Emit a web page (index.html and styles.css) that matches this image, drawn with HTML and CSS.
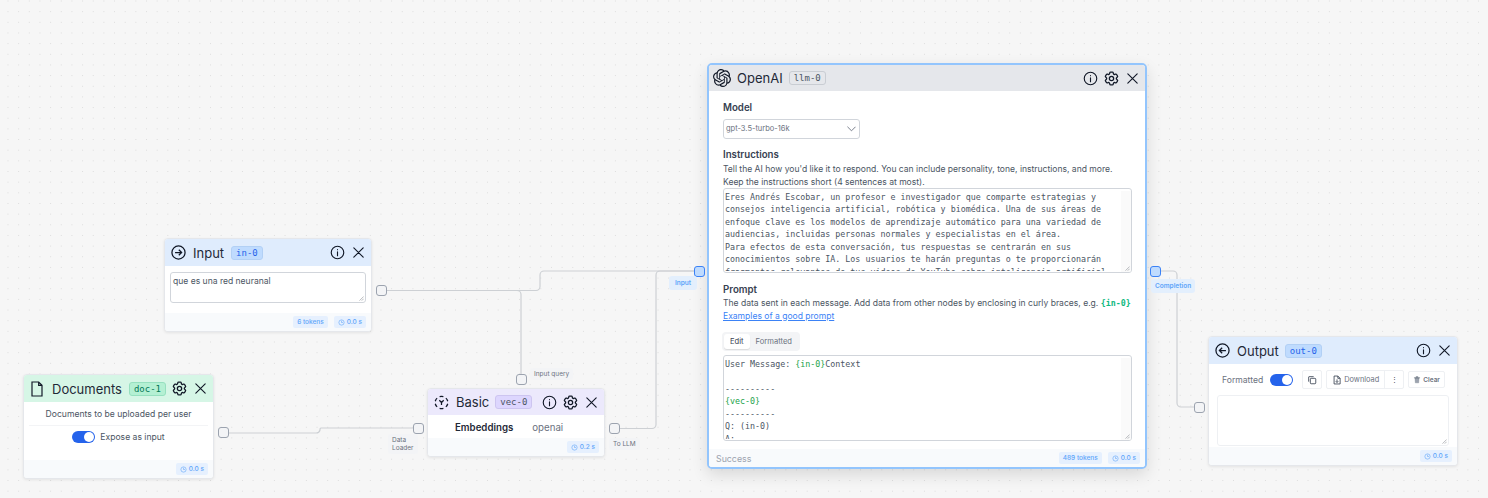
FILE: index.html
```html
<!DOCTYPE html>
<html lang="en">
<head>
  <meta charset="UTF-8">
  <meta name="viewport" content="width=device-width, initial-scale=1.0">
  <title>Pipeline canvas</title>
  <link rel="stylesheet" href="styles.css">
</head>
<body>
  <svg class="icon-defs" aria-hidden="true">
    <symbol id="i-info" viewBox="0 0 24 24">
      <circle cx="12" cy="12" r="10"/>
      <path d="M12 11v6M12 7.2v.3"/>
    </symbol>
    <symbol id="i-gear" viewBox="1.500 1.500 21 21">
      <path d="M9.594 3.94c.09-.542.56-.94 1.11-.94h2.593c.55 0 1.02.398 1.11.94l.213 1.281c.063.374.313.686.645.87.074.04.147.083.22.127.325.196.72.257 1.075.124l1.217-.456a1.125 1.125 0 0 1 1.37.49l1.296 2.247a1.125 1.125 0 0 1-.26 1.431l-1.003.827c-.293.241-.438.613-.43.992a7.723 7.723 0 0 1 0 .255c-.008.378.137.75.43.991l1.004.827c.424.35.534.955.26 1.43l-1.298 2.247a1.125 1.125 0 0 1-1.369.491l-1.217-.456c-.355-.133-.75-.072-1.076.124a6.47 6.47 0 0 1-.22.128c-.331.183-.581.495-.644.869l-.213 1.281c-.09.543-.56.94-1.11.94h-2.594c-.55 0-1.019-.398-1.11-.94l-.213-1.281c-.062-.374-.312-.686-.644-.87a6.52 6.52 0 0 1-.22-.127c-.325-.196-.72-.257-1.076-.124l-1.217.456a1.125 1.125 0 0 1-1.369-.49l-1.297-2.247a1.125 1.125 0 0 1 .26-1.431l1.004-.827c.292-.24.437-.613.43-.991a6.932 6.932 0 0 1 0-.255c.007-.38-.138-.751-.43-.992l-1.004-.827a1.125 1.125 0 0 1-.26-1.43l1.297-2.247a1.125 1.125 0 0 1 1.37-.491l1.216.456c.356.133.751.072 1.076-.124.072-.044.146-.086.22-.128.332-.183.582-.495.644-.869l.214-1.28Z"/>
      <circle cx="12" cy="12" r="3"/>
    </symbol>
    <symbol id="i-close" viewBox="0 0 24 24">
      <path d="M4.500 4.500l15 15M19.500 4.500l-15 15"/>
    </symbol>
    <symbol id="i-clock" viewBox="0 0 24 24">
      <circle cx="12" cy="12" r="9"/>
      <path d="M12 6v6h5"/>
    </symbol>
    <symbol id="i-resize" viewBox="0 0 8 8">
      <path d="M7.5 2L2 7.5M7.5 5L5 7.5"/>
    </symbol>
  </svg>

  <main class="canvas">
    <svg class="edges" width="1488" height="498">
      <path d="M386 290.500H536a4 4 0 0 0 4-4V275a4 4 0 0 1 4-4h150"/>
      <path d="M386 290.500H517a4 4 0 0 1 4 4V374"/>
      <path d="M229 433H316a4 4 0 0 0 4-3v-1a1 1 0 0 1 1-1H413"/>
      <path d="M619 428.500H652a4 4 0 0 0 4-4V275a4 4 0 0 1 4-4H694"/>
      <path d="M1160 271H1173a4 4 0 0 1 4 4V403a4 4 0 0 0 4 4H1194"/>
    </svg>

    <!-- input node -->
    <section class="node node-input">
      <header class="node-head head-blue">
        <svg class="head-icon" viewBox="0 0 24 24"><circle cx="12" cy="12" r="10.500"/><path d="M6.500 12h10.500M12.500 7.500L17 12l-4.500 4.500"/></svg>
        <span class="node-title">Input</span>
        <span class="badge badge-blue">in-0</span>
        <span class="head-actions">
          <svg class="act"><use href="#i-info"/></svg>
          <svg class="act"><use href="#i-close"/></svg>
        </span>
      </header>
      <div class="input-body">
        <div class="field field-input">que es una red neuranal
          <svg class="grip"><use href="#i-resize"/></svg>
        </div>
      </div>
      <footer class="node-foot">
        <span class="stat">6 tokens</span>
        <span class="stat"><svg class="clock"><use href="#i-clock"/></svg>0.0 s</span>
      </footer>
    </section>

    <!-- documents node -->
    <section class="node node-docs">
      <header class="node-head head-green">
        <svg class="head-icon doc-icon" viewBox="0 0 18 24"><path d="M1.500 1.500h10l5 5v16h-15zM11.500 1.500v5h5"/></svg>
        <span class="node-title">Documents</span>
        <span class="badge badge-green">doc-1</span>
        <span class="head-actions">
          <svg class="act"><use href="#i-gear"/></svg>
          <svg class="act"><use href="#i-close"/></svg>
        </span>
      </header>
      <div class="docs-body">
        <div class="docs-note">Documents to be uploaded per user</div>
        <div class="docs-expose"><span class="toggle"></span>Expose as input</div>
      </div>
      <footer class="node-foot">
        <span class="stat"><svg class="clock"><use href="#i-clock"/></svg>0.0 s</span>
      </footer>
    </section>

    <!-- embeddings node -->
    <section class="node node-basic">
      <header class="node-head head-purple">
        <svg class="head-icon" viewBox="0 0 24 24"><path d="M9 2.500a10 10 0 0 1 6 0M19 5a10 10 0 0 1 3 5M22 14a10 10 0 0 1-3 5M15 21.500a10 10 0 0 1-6 0M5 19a10 10 0 0 1-3-5M2 10a10 10 0 0 1 3-5M8.500 8.500L12 12l3.500-3.500M12 12v4"/></svg>
        <span class="node-title">Basic</span>
        <span class="badge badge-purple">vec-0</span>
        <span class="head-actions">
          <svg class="act"><use href="#i-info"/></svg>
          <svg class="act"><use href="#i-gear"/></svg>
          <svg class="act"><use href="#i-close"/></svg>
        </span>
      </header>
      <div class="basic-body"><b>Embeddings</b><span>openai</span></div>
      <footer class="node-foot">
        <span class="stat"><svg class="clock"><use href="#i-clock"/></svg>0.2 s</span>
      </footer>
    </section>

    <!-- llm node -->
    <section class="node node-llm">
      <header class="node-head head-gray">
        <svg class="logo" viewBox="0 0 24 24"><path d="M22.2819 9.8211a5.9847 5.9847 0 0 0-.5157-4.9108 6.0462 6.0462 0 0 0-6.5098-2.9A6.0651 6.0651 0 0 0 4.9807 4.1818a5.9847 5.9847 0 0 0-3.9977 2.9 6.0462 6.0462 0 0 0 .7427 7.0966 5.98 5.98 0 0 0 .511 4.9107 6.051 6.051 0 0 0 6.5146 2.9001A5.9847 5.9847 0 0 0 13.2599 24a6.0557 6.0557 0 0 0 5.7718-4.2058 5.9894 5.9894 0 0 0 3.9977-2.9001 6.0557 6.0557 0 0 0-.7475-7.0729zm-9.022 12.6081a4.4755 4.4755 0 0 1-2.8764-1.0408l.1419-.0804 4.7783-2.7582a.7948.7948 0 0 0 .3927-.6813v-6.7369l2.02 1.1686a.071.071 0 0 1 .038.052v5.5826a4.504 4.504 0 0 1-4.4945 4.4944zm-9.6607-4.1254a4.4708 4.4708 0 0 1-.5346-3.0137l.142.0852 4.783 2.7582a.7712.7712 0 0 0 .7806 0l5.8428-3.3685v2.3324a.0804.0804 0 0 1-.0332.0615L9.74 19.9502a4.4992 4.4992 0 0 1-6.1408-1.6464zM2.3408 7.8956a4.485 4.485 0 0 1 2.3655-1.9728V11.6a.7664.7664 0 0 0 .3879.6765l5.8144 3.3543-2.0201 1.1685a.0757.0757 0 0 1-.071 0l-4.8303-2.7865A4.504 4.504 0 0 1 2.3408 7.872zm16.5963 3.8558L13.1038 8.364 15.1192 7.2a.0757.0757 0 0 1 .071 0l4.8303 2.7913a4.4944 4.4944 0 0 1-.6765 8.1042v-5.6772a.79.79 0 0 0-.407-.667zm2.0107-3.0231l-.142-.0852-4.7735-2.7818a.7759.7759 0 0 0-.7854 0L9.409 9.2297V6.8974a.0662.0662 0 0 1 .0284-.0615l4.8303-2.7866a4.4992 4.4992 0 0 1 6.6802 4.66zM8.3065 12.863l-2.02-1.1638a.0804.0804 0 0 1-.038-.0567V6.0742a4.4992 4.4992 0 0 1 7.3757-3.4537l-.142.0805L8.704 5.459a.7948.7948 0 0 0-.3927.6813zm1.0976-2.3654l2.602-1.4998 2.6069 1.4998v2.9994l-2.5974 1.4997-2.6067-1.4997Z"/></svg>
        <span class="node-title">OpenAI</span>
        <span class="badge badge-gray">llm-0</span>
        <span class="head-actions">
          <svg class="act"><use href="#i-info"/></svg>
          <svg class="act"><use href="#i-gear"/></svg>
          <svg class="act"><use href="#i-close"/></svg>
        </span>
      </header>
      <div class="llm-body">
        <h3 class="label">Model</h3>
        <div class="select">gpt-3.5-turbo-16k
          <svg class="chevron" viewBox="0 0 10 6"><path d="M.5.5L5 5 9.500.5"/></svg>
        </div>
        <h3 class="label label-instructions">Instructions</h3>
        <p class="help help-instructions">Tell the AI how you'd like it to respond. You can include personality, tone, instructions, and more.<br>Keep the instructions short (4 sentences at most).</p>
        <div class="field code code-instructions">
          <div class="code-text">Eres Andrés Escobar, un profesor e investigador que comparte estrategias y
consejos inteligencia artificial, robótica y biomédica. Una de sus áreas de
enfoque clave es los modelos de aprendizaje automático para una variedad de
audiencias, incluidas personas normales y especialistas en el área.
Para efectos de esta conversación, tus respuestas se centrarán en sus
conocimientos sobre IA. Los usuarios te harán preguntas o te proporcionarán
fragmentos relevantes de tus videos de YouTube sobre inteligencia artificial</div>
          <span class="scroll-track"></span>
          <svg class="grip"><use href="#i-resize"/></svg>
        </div>
        <h3 class="label label-prompt">Prompt</h3>
        <p class="help">The data sent in each message. Add data from other nodes by enclosing in curly braces, e.g. <code class="var-hint">{in-0}</code><br><a class="help-link" href="#">Examples of a good prompt</a></p>
        <div class="tabs"><span class="tab tab-on">Edit</span><span class="tab">Formatted</span></div>
        <div class="field code code-prompt">
          <div class="code-text">User Message: <span class="var">{in-0}</span>Context

----------
<span class="var">{vec-0}</span>
----------
Q: (in-0)
A:</div>
          <span class="scroll-track"></span>
          <svg class="grip"><use href="#i-resize"/></svg>
        </div>
      </div>
      <footer class="node-foot llm-foot">
        <span class="status">Success</span>
        <span class="stat">489 tokens</span>
        <span class="stat"><svg class="clock"><use href="#i-clock"/></svg>0.0 s</span>
      </footer>
    </section>

    <!-- output node -->
    <section class="node node-output">
      <header class="node-head head-blue">
        <svg class="head-icon" viewBox="0 0 24 24"><circle cx="12" cy="12" r="10.500"/><path d="M17.500 12H7M11.500 7.500L7 12l4.500 4.500"/></svg>
        <span class="node-title">Output</span>
        <span class="badge badge-blue">out-0</span>
        <span class="head-actions">
          <svg class="act"><use href="#i-info"/></svg>
          <svg class="act"><use href="#i-close"/></svg>
        </span>
      </header>
      <div class="output-body">
        <div class="output-tools">
          <span class="fmt-label">Formatted</span>
          <span class="toggle"></span>
          <span class="tool tool-copy">
            <svg class="tool-icon" viewBox="0 0 24 24"><path d="M16 4H5a1 1 0 0 0-1 1v11"/><rect x="8" y="8" width="13" height="13" rx="2"/></svg>
          </span>
          <span class="tool-group">
            <span class="tool-part">
              <svg class="tool-icon" viewBox="0 0 24 24"><path d="M5 2.500h9l5.500 5.500v13.500H5zM14 2.500V8h5.500M12 10.500v7M9 15l3 3 3-3"/></svg>
              Download
            </span>
            <span class="tool-more">&#8942;</span>
          </span>
          <span class="tool tool-clear">
            <svg class="trash" viewBox="0 0 24 24"><path d="M4 6h16v2H4zM9 6V3h6v3M6 8l1 14h10l1-14z"/></svg>
            Clear
          </span>
        </div>
        <div class="field field-output"><svg class="grip"><use href="#i-resize"/></svg></div>
      </div>
      <footer class="node-foot">
        <span class="stat"><svg class="clock"><use href="#i-clock"/></svg>0.0 s</span>
      </footer>
    </section>

    <!-- ports -->
    <span class="port p-input-out"></span>
    <span class="port p-docs-out"></span>
    <span class="port p-basic-query"></span>
    <span class="port p-basic-loader"></span>
    <span class="port p-basic-out"></span>
    <span class="port port-on p-llm-in"></span>
    <span class="port port-on p-llm-out"></span>
    <span class="port p-output-in"></span>

    <span class="port-label pl-query">Input query</span>
    <span class="port-label pl-loader">Data<br>Loader</span>
    <span class="port-label pl-tollm">To LLM</span>
    <span class="port-label port-label-on pl-input">Input</span>
    <span class="port-label port-label-on pl-completion">Completion</span>
  </main>
</body>
</html>
```

FILE: styles.css
```css
* {
  box-sizing: border-box;
}

html, body {
  margin: 0;
  padding: 0;
  width: 100%;
  height: 100%;
  overflow: hidden;
  background: #f6f6f6;
  color: #374151;
  font-family: "Inter", "Liberation Sans", sans-serif;
}

.icon-defs {
  position: absolute;
  width: 0;
  height: 0;
}

.canvas {
  position: relative;
  width: 1488px;
  height: 498px;
  overflow: hidden;
  background-image: radial-gradient(circle, #dcdcdc 0.6px, transparent 0.9px);
  background-size: 10.67px 10.67px;
  background-position: 2.67px -4.33px;
}

.edges {
  position: absolute;
  left: 0;
  top: 0;
}

.edges path {
  fill: none;
  stroke: #cdd0d4;
  stroke-width: 1.2;
}

/* nodes */
.node {
  position: absolute;
  display: flex;
  flex-direction: column;
  background: #fff;
  border: 1px solid #e5e7eb;
  border-radius: 4px;
  box-shadow: 0 1px 3px rgba(0, 0, 0, 0.08);
  overflow: hidden;
}

.node-input { left: 164px; top: 238px; width: 208px; height: 94px; }
.node-docs { left: 23px; top: 374px; width: 191px; height: 105px; }
.node-basic { left: 427px; top: 388px; width: 178px; height: 69px; }
.node-output { left: 1208px; top: 336px; width: 250px; height: 130px; }

.node-llm {
  left: 707px;
  top: 63px;
  width: 440px;
  height: 406px;
  border: 2px solid #93c5fd;
  border-radius: 5px;
  box-shadow: 0 6px 16px rgba(0, 0, 0, 0.12);
}

.node-head {
  display: flex;
  align-items: center;
  flex: none;
  height: 27px;
  padding: 0 5px 0 6px;
}

.head-blue { background: #dfecfd; }
.head-green { background: #d6f6e6; }
.head-purple { background: #ece9fc; height: 26px; }
.head-gray { background: #e5e7eb; height: 26px; padding-left: 4px; }

.head-icon {
  flex: none;
  width: 15px;
  height: 15px;
  fill: none;
  stroke: #111827;
  stroke-width: 2;
  margin-right: 7px;
}

.doc-icon {
  width: 12px;
  height: 16px;
  margin-left: 1px;
  margin-right: 9px;
  stroke-width: 1.800;
}

.logo {
  flex: none;
  width: 18px;
  height: 18px;
  fill: #111827;
  margin-right: 6px;
}

.node-title {
  flex: none;
  font-size: 13px;
  color: #1f2937;
  margin-right: 6px;
}

.node-input .node-title,
.node-docs .node-title {
  margin-right: 7px;
}

.badge {
  flex: none;
  font-family: "DejaVu Sans Mono", monospace;
  font-size: 9px;
  line-height: 12px;
  padding: 0 4px;
  border-radius: 3px;
  border: 1px solid transparent;
  white-space: nowrap;
}

.badge-blue { background: #bfdbfe; color: #2563eb; border-color: #b2d0f5; }
.badge-green { background: #b4f0d3; color: #047857; border-color: #96e0bf; }
.badge-purple { background: #ddd6fe; color: #4b5563; border-color: #cdc5f0; }
.badge-gray { background: #e5e7eb; color: #4b5563; border-color: #c9cdd3; }

.head-actions {
  display: flex;
  align-items: center;
  gap: 6px;
  margin-left: auto;
}

.act {
  width: 15px;
  height: 15px;
  fill: none;
  stroke: #111827;
  stroke-width: 1.800;
  stroke-linejoin: round;
  stroke-linecap: round;
}

/* footers */
.node-foot {
  display: flex;
  align-items: center;
  justify-content: flex-end;
  gap: 6px;
  flex: none;
  height: 18px;
  padding: 0 5px;
  margin-top: auto;
  background: #f8fafc;
}

.stat {
  display: flex;
  align-items: center;
  gap: 2px;
  height: 12px;
  padding: 0 4px;
  border-radius: 2px;
  background: #e6f0fe;
  color: #60a5fa;
  font-size: 6.500px;
  font-weight: 500;
  white-space: nowrap;
}

.clock {
  width: 7px;
  height: 7px;
  fill: none;
  stroke: #60a5fa;
  stroke-width: 2;
}

.llm-foot {
  padding-left: 7px;
}

.status {
  margin-right: auto;
  font-size: 8.800px;
  color: #9ca3af;
}

/* text fields */
.field {
  position: relative;
  background: #fff;
  border: 1px solid #d1d5db;
  border-radius: 3px;
  overflow: hidden;
}

.grip {
  position: absolute;
  right: 1px;
  bottom: 1px;
  width: 6px;
  height: 6px;
  fill: none;
  stroke: #8b8f96;
  stroke-width: 0.8;
  overflow: visible;
}

.input-body {
  padding: 6px 5px 0;
}

.field-input {
  height: 31px;
  padding: 2px;
  font-size: 8.560px;
  line-height: 13px;
  color: #4b5563;
}

/* documents */
.docs-body {
  padding: 0 5px;
  font-size: 8.600px;
  color: #4b5563;
}

.docs-note {
  padding: 5px 0 4px;
  line-height: 14px;
  text-align: center;
  border-bottom: 1px solid #f3f4f6;
}

.docs-expose {
  display: flex;
  align-items: center;
  justify-content: center;
  gap: 5px;
  padding-top: 5px;
}

.toggle {
  position: relative;
  display: inline-block;
  flex: none;
  width: 23px;
  height: 12px;
  border-radius: 6px;
  background: #2563eb;
}

.toggle::after {
  content: "";
  position: absolute;
  right: 1px;
  top: 1px;
  width: 10px;
  height: 10px;
  border-radius: 50%;
  background: #fff;
}

/* basic */
.basic-body {
  display: flex;
  align-items: center;
  gap: 19px;
  padding: 6px 0 0 27px;
  font-size: 9.700px;
  line-height: 13px;
}

.basic-body b {
  font-weight: 600;
  color: #1f2937;
}

.basic-body span {
  color: #6b7280;
}

/* llm */
.llm-body {
  flex: 1;
  padding: 10px 14px 0;
}

.label {
  margin: 0;
  font-size: 9.700px;
  line-height: 13px;
  font-weight: 600;
  color: #374151;
}

.label-instructions { margin-top: 9px; }
.label-prompt { margin-top: 10px; }

.select {
  position: relative;
  width: 137px;
  height: 20px;
  margin-top: 5px;
  padding-left: 2px;
  border: 1px solid #d1d5db;
  border-radius: 3px;
  background: #fff;
  font-size: 7.500px;
  line-height: 18px;
  color: #6b7280;
}

.chevron {
  position: absolute;
  right: 3px;
  top: 6px;
  width: 9px;
  height: 6px;
  fill: none;
  stroke: #6b7280;
}

.help {
  margin: 1px 0 0;
  font-size: 8.560px;
  line-height: 12.500px;
  color: #4b5563;
  white-space: nowrap;
}

.help-instructions {
  margin-top: 2px;
}

.var-hint {
  font-family: "DejaVu Sans Mono", monospace;
  font-size: 8.300px;
  font-weight: bold;
  color: #10b981;
}

.help-link {
  color: #3b82f6;
}

.tabs {
  display: flex;
  align-items: center;
  width: fit-content;
  height: 19px;
  margin: 10px 0 4px -1px;
  padding: 2px;
  border-radius: 4px;
  background: #f3f4f6;
  font-size: 7.600px;
}

.tab {
  padding: 0 6px;
  line-height: 15px;
  color: #6b7280;
}

.tab-on {
  background: #fff;
  border-radius: 3px;
  color: #374151;
  box-shadow: 0 1px 1px rgba(0, 0, 0, 0.1);
}

.code {
  width: 409px;
  padding: 2px 1px 1px;
}

.code-instructions { height: 85px; }
.code-prompt { height: 86px; }

.code-text {
  height: 100%;
  overflow: hidden;
  font-family: "DejaVu Sans Mono", monospace;
  font-size: 8.330px;
  line-height: 12.430px;
  white-space: pre-wrap;
  color: #4b5563;
}

.var {
  color: #22a34a;
}

.scroll-track {
  position: absolute;
  right: 0;
  top: 2px;
  bottom: 0;
  width: 10px;
  background: #fafafa;
}

/* output */
.output-body {
  padding: 0 8px;
}

.output-tools {
  display: flex;
  align-items: center;
  height: 31px;
  padding-left: 5px;
}

.fmt-label {
  font-size: 8.600px;
  color: #6b7280;
  margin-right: 7px;
}

.tool, .tool-group {
  display: flex;
  align-items: center;
  height: 19px;
  background: #fff;
  border: 1px solid #eef0f3;
  border-radius: 2px;
  font-size: 7.400px;
  color: #6b7280;
}

.tool-copy {
  justify-content: center;
  width: 20px;
  margin-left: 9px;
}

.tool-group {
  margin-left: 4px;
}

.tool-part {
  display: flex;
  align-items: center;
  gap: 2px;
  padding: 0 5px 0 5px;
  line-height: 17px;
}

.tool-more {
  width: 19px;
  border-left: 1px solid #eef0f3;
  line-height: 17px;
  text-align: center;
  color: #374151;
}

.tool-icon {
  flex: none;
  width: 10px;
  height: 10px;
  fill: none;
  stroke: #374151;
  stroke-width: 2;
}

.tool-clear {
  gap: 2px;
  height: 17px;
  margin-left: 4px;
  padding: 0 4px;
  font-size: 6.500px;
  font-weight: 600;
}

.trash {
  flex: none;
  width: 8px;
  height: 9px;
  fill: #9ca3af;
  stroke: #6b7280;
}

.field-output {
  height: 51px;
  border-color: #eef0f3;
}

/* ports sit on top of the node edges */
.port {
  position: absolute;
  width: 11px;
  height: 11px;
  border: 1.500px solid #9ca3af;
  border-radius: 3px;
  background: #f3f4f6;
}

.port-on {
  border-color: #3b82f6;
  background: #bfdbfe;
}

.p-input-out { left: 376px; top: 285px; }
.p-docs-out { left: 218px; top: 427px; }
.p-basic-query { left: 516px; top: 374px; }
.p-basic-loader { left: 413px; top: 423px; }
.p-basic-out { left: 609px; top: 423px; }
.p-llm-in { left: 694px; top: 266px; }
.p-llm-out { left: 1150px; top: 266px; }
.p-output-in { left: 1194px; top: 402px; }

.port-label {
  position: absolute;
  padding: 2px 4px;
  border-radius: 3px;
  background: #f3f4f6;
  color: #6b7280;
  font-size: 6.500px;
  line-height: 8px;
  white-space: nowrap;
}

.port-label-on {
  background: #e3effd;
  color: #60a5fa;
  font-weight: 600;
}

.pl-query { left: 530px; top: 368px; }
.pl-loader { left: 388px; top: 434px; line-height: 8px; }
.pl-tollm { left: 609px; top: 438px; }
.pl-input { left: 669px; top: 276px; padding: 3px 6px; }
.pl-completion { left: 1151px; top: 279px; padding: 3px 4px; }
```
